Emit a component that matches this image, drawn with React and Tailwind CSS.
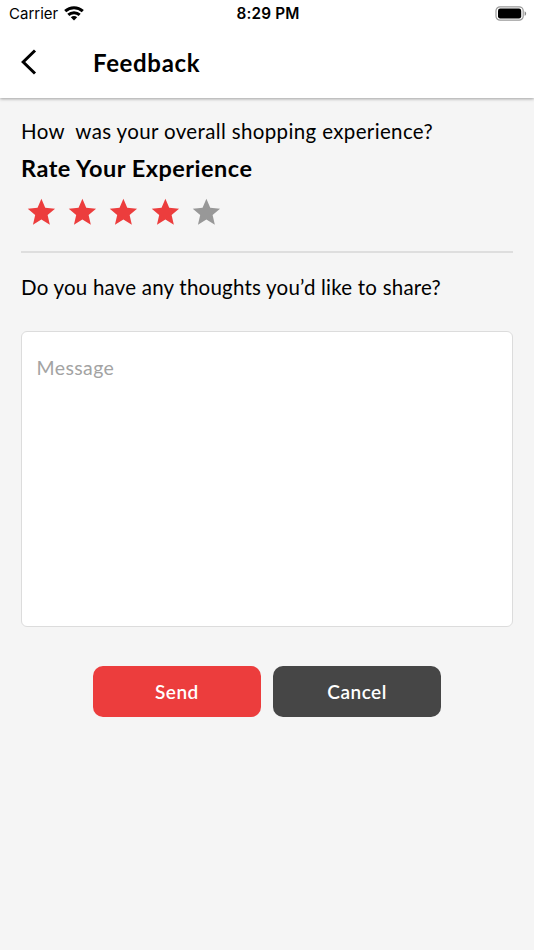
import { useState } from "react";

const StatusBar = () => (
  <div className="flex h-7 items-center pl-[9px] pr-[7px] font-['Inter',sans-serif] text-[15px] leading-7">
    <div className="flex flex-1 items-center gap-1.5">
      <span className="text-[15px]">Carrier</span>
      <svg className="-mt-0.5" width="20" height="15" viewBox="0 0 20 15">
        <g fill="none" stroke="#000" strokeWidth="3">
          <path d="M1.2 5.2C6.2.5 13.8.5 18.8 5.2" />
          <path d="M4.3 8.9C7.5 5.9 12.5 5.9 15.7 8.9" />
        </g>
        <path d="M10 14.4l-3.2-3.1c1.8-1.6 4.6-1.6 6.4 0z" />
      </svg>
    </div>
    <span className="text-[15.3px] font-semibold tracking-[0.2px]">
      8:29 PM
    </span>
    <div className="flex flex-1 justify-end">
      <svg className="-mt-0.5" width="32" height="15" viewBox="0 0 32 15">
        <rect
          x="1"
          y=".8"
          width="27.2"
          height="13.4"
          rx="4"
          fill="none"
          stroke="#999"
          strokeWidth="1.2"
        />
        <rect x="3" y="2.6" width="23.2" height="9.8" rx="2.2" />
        <path d="M29.6 5.2c2 .8 2 3.8 0 4.6z" fill="#888" />
      </svg>
    </div>
  </div>
);

const Header = () => (
  <header className="bg-white shadow-[0_1px_3px_rgba(0,0,0,0.35)]">
    <StatusBar />
    <div className="flex h-[70px] items-center pb-0.5 pl-[21px]">
      <button aria-label="Back">
        <svg className="block" width="16" height="26" viewBox="0 0 16 26">
          <path
            d="M14 1.5L2.2 13 14 24.5"
            fill="none"
            stroke="#000"
            strokeWidth="3"
          />
        </svg>
      </button>
      <h1 className="ml-14 pt-0.5 text-[24px] font-bold tracking-[0.65px]">
        Feedback
      </h1>
    </div>
  </header>
);

const Star = ({ active, onClick }) => (
  <button onClick={onClick} aria-label="Rate">
    <svg
      className={
        active ? "block fill-[#ec3d3d]" : "block fill-[#989898]"
      }
      width="32.8"
      height="32.8"
      viewBox="0 0 24 24"
    >
      <path d="M12 17.27L18.18 21l-1.64-7.03L22 9.24l-7.19-.61L12 2 9.19 8.63 2 9.24l5.46 4.73L5.82 21z" />
    </svg>
  </button>
);

const App = () => {
  const [rating, setRating] = useState(4);

  return (
    <div className="flex min-h-screen flex-col bg-[#f5f5f5] font-['Lato',sans-serif] text-black">
      <Header />
      <main className="flex flex-col px-[21px] pt-[18px]">
        <p className="h-[30px] whitespace-pre text-[20.5px] leading-[30px] tracking-[0.36px]">
          {"How  was your overall shopping experience?"}
        </p>
        <h2 className="mt-[7px] h-[30px] text-[23.5px] font-bold leading-[30px] tracking-[0.48px]">
          Rate Your Experience
        </h2>
        <div className="mt-[12.6px] flex gap-[8.4px] pl-1">
          {[1, 2, 3, 4, 5].map((value) => (
            <Star
              key={value}
              active={value <= rating}
              onClick={() => setRating(value)}
            />
          ))}
        </div>
        <hr className="mt-[22.6px] border-t-2 border-[#dedede]" />
        <p className="mt-[19px] h-[30px] text-[20.5px] leading-[30px] tracking-[0.22px]">
          Do you have any thoughts you’d like to share?
        </p>
        <textarea
          className="mt-[29px] block h-[296px] w-full resize-none rounded-md border border-[#dcdcdc] bg-white px-[14.5px] py-[22px] text-[19.5px] leading-[28px] tracking-[0.4px] outline-none placeholder:text-[#a3a3a3]"
          placeholder="Message"
        />
        <div className="mt-[39px] flex justify-center gap-[12.6px] text-[19px] font-semibold tracking-[0.5px] text-white">
          <button className="h-[51.5px] w-[167.6px] rounded-[10px] bg-[#ec3d3d] pt-px">
            Send
          </button>
          <button className="h-[51.5px] w-[167.6px] rounded-[10px] bg-[#464646] pt-px">
            Cancel
          </button>
        </div>
      </main>
    </div>
  );
};

export default App;
